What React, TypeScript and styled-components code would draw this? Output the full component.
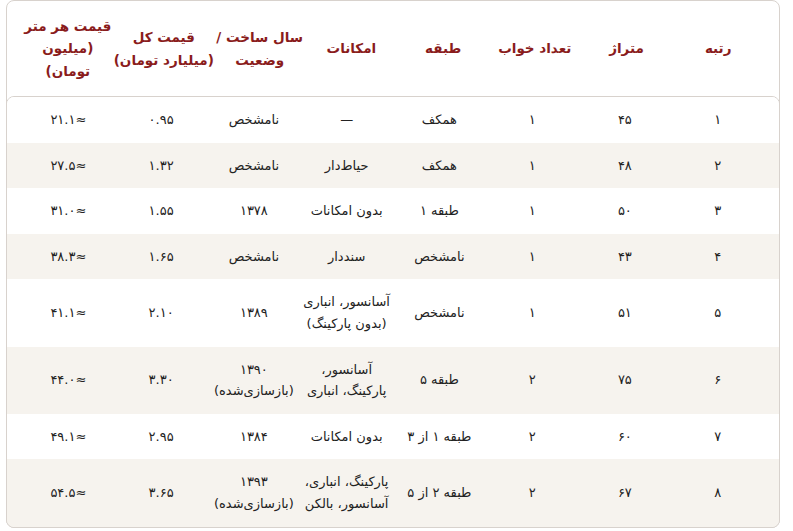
import React from 'react'
import styled, { createGlobalStyle } from 'styled-components'

const GlobalStyle = createGlobalStyle`
  html, body {
    margin: 0;
    padding: 0;
    background: #ffffff;
  }
  body {
    font-family: 'DejaVu Sans', 'Noto Sans', sans-serif;
    color: #222222;
  }
`

const Page = styled.div`
  padding: 0 13px 4px 6px;
  direction: rtl;
`

const Wrapper = styled.div`
  border: 1px solid #d8d2cd;
  border-radius: 8px;
`

const HeadRow = styled.div`
  display: grid;
  grid-template-columns: repeat(8, 1fr);
  align-items: center;
  height: 95px;
  padding: 0 15px;
`

const HeadCell = styled.div`
  text-align: center;
  font-size: 13.5px;
  font-weight: 700;
  line-height: 22.5px;
  color: #8a1c1c;
  white-space: nowrap;
`

const Body = styled.div`
  margin: 0 -1px -1px;
  border: 1px solid #d8d2cd;
  border-radius: 8px;
  overflow: hidden;
`

const Row = styled.div<{ $striped: boolean }>`
  display: grid;
  grid-template-columns: repeat(8, 1fr);
  align-items: center;
  padding: 12px 15px;
  background: ${({ $striped }) => ($striped ? '#f6f3ee' : '#ffffff')};
`

const Cell = styled.div`
  text-align: center;
  font-size: 13px;
  line-height: 21.6px;
  padding: 0 3px;
`

const headers: React.ReactNode[] = [
  'رتبه',
  'متراژ',
  'تعداد خواب',
  'طبقه',
  'امکانات',
  <>سال ساخت /<br />وضعیت</>,
  <>قیمت کل<br />(میلیارد تومان)</>,
  <>قیمت هر متر<br />(میلیون<br />تومان)</>,
]

const rows: string[][] = [
  ['۱', '۴۵', '۱', 'همکف', '—', 'نامشخص', '۰.۹۵', '≈۲۱.۱'],
  ['۲', '۴۸', '۱', 'همکف', 'حیاط‌دار', 'نامشخص', '۱.۳۲', '≈۲۷.۵'],
  ['۳', '۵۰', '۱', 'طبقه ۱', 'بدون امکانات', '۱۳۷۸', '۱.۵۵', '≈۳۱.۰'],
  ['۴', '۴۳', '۱', 'نامشخص', 'سنددار', 'نامشخص', '۱.۶۵', '≈۳۸.۳'],
  ['۵', '۵۱', '۱', 'نامشخص', 'آسانسور، انباری (بدون پارکینگ)', '۱۳۸۹', '۲.۱۰', '≈۴۱.۱'],
  ['۶', '۷۵', '۲', 'طبقه ۵', 'آسانسور، پارکینگ، انباری', '۱۳۹۰ (بازسازی‌شده)', '۳.۳۰', '≈۴۴.۰'],
  ['۷', '۶۰', '۲', 'طبقه ۱ از ۳', 'بدون امکانات', '۱۳۸۴', '۲.۹۵', '≈۴۹.۱'],
  ['۸', '۶۷', '۲', 'طبقه ۲ از ۵', 'پارکینگ، انباری، آسانسور، بالکن', '۱۳۹۳ (بازسازی‌شده)', '۳.۶۵', '≈۵۴.۵'],
]

export default function App() {
  return (
    <Page>
      <GlobalStyle />
      <Wrapper>
        <HeadRow>
          {headers.map((h, i) => (
            <HeadCell key={i}>{h}</HeadCell>
          ))}
        </HeadRow>
        <Body>
          {rows.map((r, i) => (
            <Row key={i} $striped={i % 2 === 1}>
              {r.map((c, j) => (
                <Cell key={j}>{c}</Cell>
              ))}
            </Row>
          ))}
        </Body>
      </Wrapper>
    </Page>
  )
}
